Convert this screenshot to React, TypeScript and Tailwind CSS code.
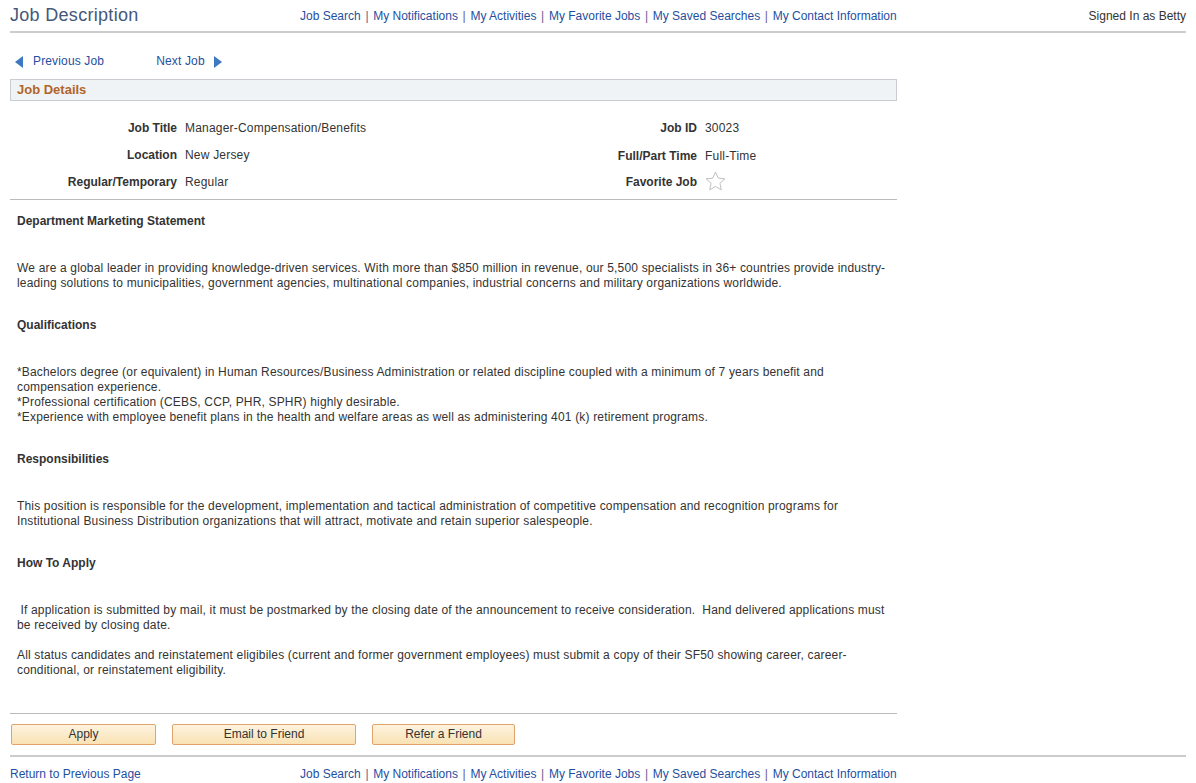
import React from 'react'

const navLinks = [
  'Job Search',
  'My Notifications',
  'My Activities',
  'My Favorite Jobs',
  'My Saved Searches',
  'My Contact Information'
]

const NavBar: React.FC = () => (
  <div className="flex items-center text-[12px] leading-[15px]">
    {navLinks.map((l, i) => (
      <React.Fragment key={l}>
        {i > 0 && <span className="px-[4.7px] text-[#6b5a8e]">|</span>}
        <a className="text-[#1f4f9f] cursor-pointer">{l}</a>
      </React.Fragment>
    ))}
  </div>
)

const Field: React.FC<{ label: string; children: React.ReactNode; className?: string }> = ({
  label,
  children,
  className
}) => (
  <div className={`flex items-center ${className ?? ''}`}>
    <div className="w-[167px] text-right font-bold text-[#333333]">{label}</div>
    <div className="pl-[8px] tracking-[0.2px] text-[#333333]">{children}</div>
  </div>
)

const Section: React.FC<{ title: string; first?: boolean; children: React.ReactNode }> = ({
  title,
  first,
  children
}) => (
  <div className={first ? 'mt-[14px]' : 'mt-[27px]'}>
    <div className="font-bold text-[#333333]">{title}</div>
    <div className="mt-[32px] w-[870px] tracking-[0.17px] text-[#333333]">{children}</div>
  </div>
)

const Star: React.FC = () => (
  <svg width="21" height="20" viewBox="0 0 24 23" className="-mt-[3px] block">
    <path
      d="M12 1.2l3.2 7 7.6.8-5.7 5.1 1.6 7.5L12 17.8l-6.7 3.8 1.6-7.5L1.2 9l7.6-.8z"
      fill="white"
      stroke="#b5b5b5"
      strokeWidth="1"
      strokeLinejoin="round"
    />
  </svg>
)

const Button: React.FC<{ w: string; children: React.ReactNode }> = ({ w, children }) => (
  <button
    className={`${w} h-[21px] rounded-[2px] border border-[#e0a46a] bg-gradient-to-b from-[#fdf3df] to-[#f9e2b4] text-[12px] leading-[19px] text-[#333333]`}
  >
    {children}
  </button>
)

export default function App() {
  return (
    <div
      className="w-[1196px] min-h-[783px] bg-white text-[12px] leading-[15px] text-[#333333]"
      style={{ fontFamily: '"Liberation Sans", Arial, sans-serif' }}
    >
      <div className="mx-[10px]">
        {/* header */}
        <div className="flex h-[33px] items-start border-b-2 border-[#cccccc]">
          <div className="w-[290px] pt-[4px] text-[18px] leading-[22px] tracking-[0.3px] text-[#44587a]">
            Job Description
          </div>
          <div className="pt-[9px]">
            <NavBar />
          </div>
          <div className="ml-auto pt-[9px] text-[#333333]">Signed In as Betty</div>
        </div>

        {/* prev / next */}
        <div className="mt-[21px] flex items-center tracking-[0.15px]">
          <a className="flex items-center text-[#1f4f9f] cursor-pointer">
            <span className="ml-[5px] mr-[10px] h-0 w-0 border-y-[6px] border-r-[8px] border-y-transparent border-r-[#3d78c2]" />
            Previous Job
          </a>
          <a className="ml-[52px] flex items-center text-[#1f4f9f] cursor-pointer">
            Next Job
            <span className="ml-[9px] h-0 w-0 border-y-[6px] border-l-[8px] border-y-transparent border-l-[#3d78c2]" />
          </a>
        </div>

        <div className="w-[887px]">
          {/* job details bar */}
          <div className="mt-[10px] flex h-[22px] items-center border border-[#c9cdd2] bg-[#f0f3f5] pb-[1px] pl-[6px] text-[13px] font-bold text-[#b0652a]">
            Job Details
          </div>

          {/* fields */}
          <div className="flex border-b border-[#bbbbbb] pb-[7px] pt-[20px]">
            <div className="w-[520px]">
              <Field label="Job Title">Manager-Compensation/Benefits</Field>
              <Field label="Location" className="mt-[12px]">New Jersey</Field>
              <Field label="Regular/Temporary" className="mt-[12px]">Regular</Field>
            </div>
            <div>
              <Field label="Job ID">30023</Field>
              <Field label="Full/Part Time" className="mt-[13px]">Full-Time</Field>
              <Field label="Favorite Job" className="mt-[8px] h-[20px]">
                <Star />
              </Field>
            </div>
          </div>

          {/* description */}
          <div className="pl-[7px]">
            <Section title="Department Marketing Statement" first>
              We are a global leader in providing knowledge-driven services. With more than $850 million in revenue, our 5,500 specialists in 36+ countries provide industry-leading solutions to municipalities, government agencies, multinational companies, industrial concerns and military organizations worldwide.
            </Section>
            <Section title="Qualifications">
              *Bachelors degree (or equivalent) in Human Resources/Business Administration or related discipline coupled with a minimum of 7 years benefit and compensation experience.
              <br />
              *Professional certification (CEBS, CCP, PHR, SPHR) highly desirable.
              <br />
              *Experience with employee benefit plans in the health and welfare areas as well as administering 401 (k) retirement programs.
            </Section>
            <Section title="Responsibilities">
              This position is responsible for the development, implementation and tactical administration of competitive compensation and recognition programs for Institutional Business Distribution organizations that will attract, motivate and retain superior salespeople.
            </Section>
            <Section title="How To Apply">
              <span className="whitespace-pre-wrap">
                {' If application is submitted by mail, it must be postmarked by the closing date of the announcement to receive consideration.  Hand delivered applications must be received by closing date.'}
              </span>
              <br />
              <br />
              All status candidates and reinstatement eligibiles (current and former government employees) must submit a copy of their SF50 showing career, career-conditional, or reinstatement eligibility.
            </Section>
          </div>

          {/* buttons */}
          <div className="mt-[35px] flex gap-[16px] border-t border-[#bbbbbb] pl-[1px] pt-[10px]">
            <Button w="w-[145px]">Apply</Button>
            <Button w="w-[184px]">Email to Friend</Button>
            <Button w="w-[143px]">Refer a Friend</Button>
          </div>
        </div>

        {/* footer */}
        <div className="mt-[10px] flex border-t-2 border-[#cccccc] pt-[10px]">
          <a className="w-[290px] text-[#1f4f9f] cursor-pointer">Return to Previous Page</a>
          <NavBar />
        </div>
      </div>
    </div>
  )
}
